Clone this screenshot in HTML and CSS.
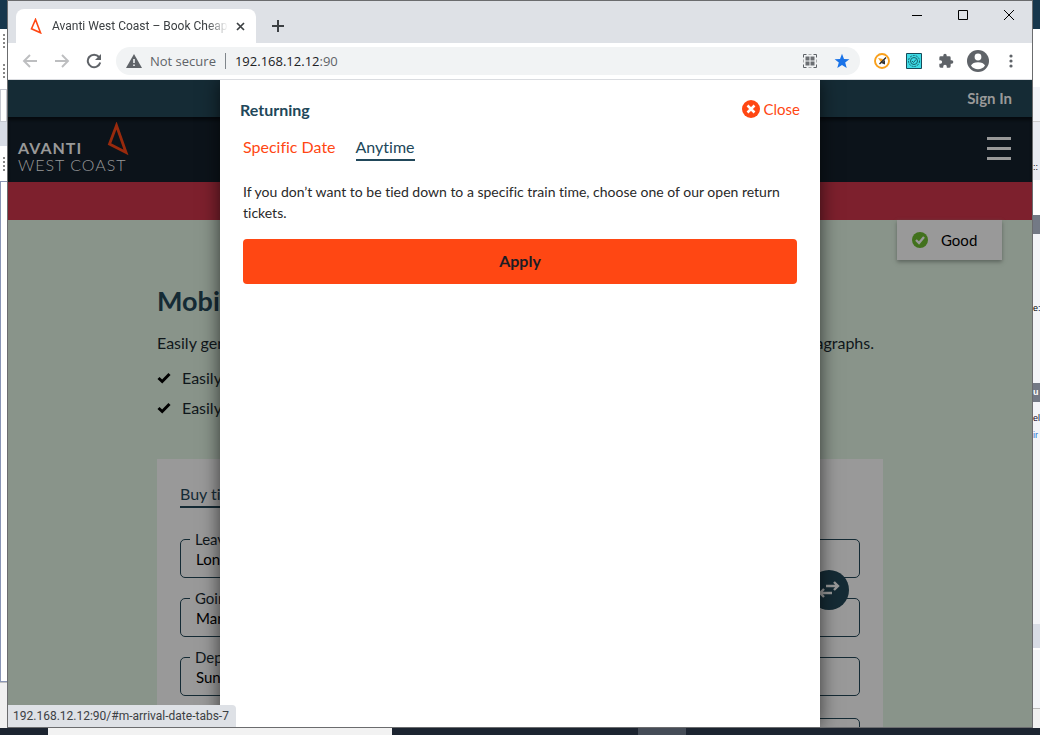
FILE: index.html
```
<!DOCTYPE html>
<html lang="en">
<head>
<meta charset="utf-8">
<title>Avanti West Coast – Book Cheap</title>
<link rel="stylesheet" href="styles.css">
</head>
<body>
<div class="desktop">
  <div class="edge edge-left">
    <div class="strip navy"></div><div class="strip grips"></div><div class="strip grips"></div><div class="strip ruled"></div><div class="strip bluish"></div><div class="strip grips second"></div><div class="strip panel"></div><div class="strip foot"></div>
  </div>
  <div class="browser">
    <div class="tabbar">
      <div class="tab">
        <svg class="favicon" viewBox="0 0 16 16"><path d="M7.5 1.5 3.5 10.8 12.5 14.8Z" fill="none" stroke="#ff4713" stroke-width="1.6"/></svg>
        <span class="tab-title">Avanti West Coast – Book Cheap</span>
        <button class="plain" aria-label="Close tab"><svg width="9" height="9" viewBox="0 0 9 9"><path d="M1 1l7 7M8 1l-7 7" stroke="#3c4043" stroke-width="1.7"/></svg></button>
      </div>
      <button class="plain new-tab" aria-label="New tab"><svg width="12" height="12" viewBox="0 0 12 12"><path d="M6 0v12M0 6h12" stroke="#3c4043" stroke-width="2"/></svg></button>
      <div class="window-buttons">
        <button class="plain" aria-label="Minimise"><svg width="10" height="10" viewBox="0 0 10 10"><path d="M0 5.5h10" stroke="#000"/></svg></button>
        <button class="plain" aria-label="Maximise"><svg width="10" height="10" viewBox="0 0 10 10"><path d="M.5.5h9v9h-9z" fill="none" stroke="#000"/></svg></button>
        <button class="plain" aria-label="Close window"><svg width="10" height="10" viewBox="0 0 10 10"><path d="M0 0l10 10M10 0L0 10" stroke="#000"/></svg></button>
      </div>
    </div>
    <div class="toolbar">
      <div class="nav-buttons">
        <button class="plain" aria-label="Back"><svg width="16" height="16" viewBox="0 0 16 16"><path d="M15 8H2M8 2L2 8l6 6" fill="none" stroke="#bdbec0" stroke-width="1.9"/></svg></button>
        <button class="plain" aria-label="Forward"><svg width="16" height="16" viewBox="0 0 16 16"><path d="M1 8h13M8 2l6 6-6 6" fill="none" stroke="#bdbec0" stroke-width="1.9"/></svg></button>
        <button class="plain" aria-label="Reload"><svg width="16" height="16" viewBox="0 0 16 16"><path d="M13 4A6.3 6.3 0 1 0 14.2 9.500" fill="none" stroke="#5f6368" stroke-width="2"/><path d="M15 1v6H9z" fill="#5f6368"/></svg></button>
      </div>
      <div class="address">
        <svg width="16" height="14" viewBox="0 0 16 14"><path d="M8 0l8 14H0z" fill="#5f6368"/><path d="M8 5v4M8 10.500v1.500" stroke="#f1f3f4" stroke-width="1.6"/></svg>
        <span class="insecure">Not secure</span>
        <span class="url">192.168.12.12<span class="port">:90</span></span>
        <svg class="qr" width="14" height="14" viewBox="0 0 14 14"><path d="M.5 3.500V.5H3.500M10.500 .5h3v3M13.500 10.500v3h-3M3.500 13.500h-3v-3" fill="none" stroke="#5f6368"/><path d="M5.500 .5h3M5.500 13.500h3M.5 5.500v3M13.500 5.500v3" stroke="#aaacae"/><path d="M2.500 2.500h4v4h-4zM7.500 2.500h4v4h-4zM2.500 7.500h4v4h-4zM7.500 7.500h4v4h-4z" fill="#6b6e72"/></svg>
        <svg width="16" height="16" viewBox="0 0 16 16"><path d="M8 .8l2 5.100 5.400.3-4.200 3.400 1.500 5.300L8 11.900l-4.700 3 1.500-5.300L.6 6.200 6 5.900z" fill="#1a73e8"/></svg>
      </div>
      <div class="extensions">
        <svg width="16" height="16" viewBox="0 0 16 16"><circle cx="8" cy="8" r="7" fill="#fff" stroke="#f9a01b" stroke-width="1.900"/><path d="M4 5l5 1-1.500 4z" fill="#f9a01b"/><path d="M12 4.500L5.500 11" stroke="#222" stroke-width="1.300"/><path d="M11 7v4.500L7 10z" fill="#333"/></svg>
        <svg width="16" height="16" viewBox="0 0 16 16"><path d="M.5.5h15v15H.5z" fill="#3ddbe5" stroke="#174a59"/><circle cx="8" cy="8" r="5.500" fill="none" stroke="#17606c" stroke-dasharray="2 1"/><circle cx="8" cy="8" r="3.500" fill="none" stroke="#17606c"/><path d="M6 8l1.500 1.500L10 6.500" fill="none" stroke="#17606c"/></svg>
        <svg width="16" height="16" viewBox="0 0 24 24"><path d="M20.500 11H19V7a2 2 0 0 0-2-2h-4V3.500a2.500 2.500 0 0 0-5 0V5H4a2 2 0 0 0-2 2v3.800h1.500a2.700 2.700 0 0 1 0 5.400H2V20a2 2 0 0 0 2 2h3.800v-1.500a2.700 2.700 0 0 1 5.400 0V22H17a2 2 0 0 0 2-2v-4h1.500a2.500 2.500 0 0 0 0-5z" fill="#5f6368"/></svg>
        <svg class="avatar" width="22" height="22" viewBox="0 0 22 22"><circle cx="11" cy="11" r="11" fill="#5f6368"/><circle cx="11" cy="7" r="3.400" fill="#fff"/><path d="M4 15.500c1.500-4.500 12.500-4.500 14 0-3 5-11 5-14 0z" fill="#fff"/></svg>
        <svg width="4" height="14" viewBox="0 0 4 14"><g fill="#5f6368"><circle cx="2" cy="2" r="1.600"/><circle cx="2" cy="7" r="1.600"/><circle cx="2" cy="12" r="1.600"/></g></svg>
      </div>
    </div>
    <div class="viewport">
      <div class="site">
        <div class="account"><a href="#">Sign In</a></div>
        <header class="masthead">
          <div class="brand">
            <div class="brand-name"><b>AVANTI</b><span>WEST COAST</span></div>
            <svg class="brand-mark" viewBox="0 0 22 34"><path d="M9.500 3.500L2.500 22 19 30.500z" fill="none" stroke="#992a0d" stroke-width="2.800"/></svg>
          </div>
          <button class="plain" aria-label="Menu"><svg width="24" height="24" viewBox="0 0 24 24"><path d="M0 1.500h24M0 11.500h24M0 21.500h24" stroke="#999" stroke-width="3"/></svg></button>
        </header>
        <div class="alert"></div>
        <main class="hero">
          <div class="status"><svg width="16" height="16" viewBox="0 0 16 16"><circle cx="8" cy="8" r="8" fill="#42711d"/><path d="M4 8l3 3 5-6" fill="none" stroke="#999" stroke-width="2.300"/></svg>Good</div>
          <h1>Mobil</h1>
          <p class="intro"><span>Easily gen</span><span>agraphs.</span></p>
          <ul class="benefits">
            <li><svg width="14" height="12" viewBox="0 0 14 12"><path d="M1.500 6l3.700 3.500L12.500 2" fill="none" stroke="#000" stroke-width="3"/></svg>Easily</li>
            <li><svg width="14" height="12" viewBox="0 0 14 12"><path d="M1.500 6l3.700 3.500L12.500 2" fill="none" stroke="#000" stroke-width="3"/></svg>Easily</li>
          </ul>
          <form class="booking">
            <a class="booking-tab" href="#">Buy tic</a>
            <div class="fields">
              <fieldset><legend><label for="from">Leav</label></legend><input id="from" value="Lon"></fieldset>
              <fieldset><legend><label for="to">Goin</label></legend><input id="to" value="Man"></fieldset>
              <fieldset><legend><label for="depart">Dep</label></legend><input id="depart" value="Sun"></fieldset>
              <fieldset class="last"><input aria-label="Return"></fieldset>
              <button class="swap" type="button" aria-label="Swap stations"><svg width="22" height="18" viewBox="0 0 22 18"><path d="M8 5h12M16 1L20 5l-4 4M14 12H2M6 8L2 12l4 4" fill="none" stroke="#999" stroke-width="2.400"/></svg></button>
            </div>
          </form>
        </main>
      </div>
      <section class="dialog" role="dialog" aria-labelledby="dialog-title">
        <div class="dialog-head">
          <h2 id="dialog-title">Returning</h2>
          <button class="plain close"><svg width="18" height="18" viewBox="0 0 18 18"><circle cx="9" cy="9" r="9" fill="#ff4713"/><path d="M5.500 5.500l7 7M12.500 5.500l-7 7" stroke="#fff" stroke-width="2.500"/></svg>Close</button>
        </div>
        <nav class="date-tabs"><a href="#">Specific Date</a><a class="current" href="#">Anytime</a></nav>
        <p class="note">If you don’t want to be tied down to a specific train time, choose one of our open return tickets.</p>
        <button class="apply">Apply</button>
      </section>
      <div class="link-status">192.168.12.12:90/#m-arrival-date-tabs-7</div>
    </div>
  </div>
  <div class="edge edge-right">
    <div class="strip navy"></div><div class="strip r1"></div><div class="strip r2"></div><div class="strip r3">::</div><div class="strip r4"></div><div class="strip grey r5"></div><div class="strip r6">e:</div><div class="strip grey r7">u</div><div class="strip r8">el<span>ir</span></div><div class="strip bluish"></div><div class="strip r9"></div><div class="strip r10"></div>
  </div>
  <div class="taskbar"><div class="search"></div><div class="task"></div></div>
</div>
</body>
</html>
```
FILE: styles.css
```
* { box-sizing: border-box; }
body { margin: 0; font-family: Lato, sans-serif; font-variant-ligatures: none; }
h1, h2, p, ul, fieldset, legend { margin: 0; padding: 0; }
a { color: inherit; text-decoration: none; }
button, input { font: inherit; color: inherit; }
svg { display: block; flex: none; }
.plain { border: 0; padding: 0; background: none; }
.desktop { display: grid; grid-template: minmax(0, 1fr) 7px / 7px minmax(0, 1fr) 7px; height: 100vh; overflow: hidden; background: #f3f4f8; }

.edge { display: flex; flex-direction: column; overflow: hidden; font: 9px/14px "Liberation Sans", sans-serif; }
.strip { flex: none; }
.navy { height: 29px; background: #17374c; }
.grips { height: 30px; border: solid #fff; border-width: 4px 0 11px; background: radial-gradient(circle at 4px 2px, #888 1px, #fff 1px) 0 0 / 7px 4px; }
.ruled { height: 33px; border: 1px solid #c5c8d0; background: #fff; }
.bluish { height: 24px; background: #d8dce5; }
.second { height: 35px; border-width: 10px 0; }
.panel { height: 501px; background: #fff; border: solid #8995b5; border-width: 1px 0 1px 1px; }
.foot { flex: 1; background: #f0f0f0; border-top: 1px solid #c0c0c0; }
.r1 { height: 58px; background: #fff; }
.r2 { height: 35px; border-bottom: 1px solid #ccc; }
.r3 { height: 58px; padding-top: 38px; background: #e8eaf0; }
.r4 { height: 35px; background: #fff; }
.grey { height: 19px; padding-top: 2px; background: #737985; color: #fff; font-weight: bold; }
.r6 { height: 149px; padding-top: 67px; }
.r8 { height: 222px; padding-top: 9px; color: #102; }
.r8 span { display: block; padding-top: 3px; color: #2a73d2; }
.r9 { height: 60px; border-top: 2px solid #fff; }
.r10 { flex: 1; border-top: 1px solid #bbb; background: #f0f0f0; }

.browser { display: flex; flex-direction: column; min-height: 0; border: 1px solid #6b6c6e; }
.tabbar { display: flex; align-items: flex-end; flex: none; height: 42px; background: #dee1e6; }
.tab { display: flex; align-items: center; gap: 8px; width: 240px; height: 34px; margin-left: 8px; padding: 0 11px 0 12px; border-radius: 8px 8px 0 0; background: #fff; font: 12px Roboto, sans-serif; color: #3c4043; }
.favicon { width: 16px; height: 16px; }
.tab-title { flex: 1; white-space: nowrap; mask-image: linear-gradient(90deg, #000 88%, transparent); }
.new-tab { margin: 0 0 11px 16px; }
.window-buttons { display: flex; gap: 36px; margin: 0 18px 23px auto; }
.toolbar { display: flex; align-items: center; flex: none; gap: 14px; height: 37px; padding: 0 19px 0 14px; border-bottom: 1px solid #dadce0; background: #fff; }
.nav-buttons { display: flex; gap: 16px; }
.address { display: flex; flex: 1; align-items: center; height: 28px; padding: 0 10px; border-radius: 14px; background: #f1f3f4; font: 13px "Open Sans", sans-serif; }
.insecure { margin-left: 8px; padding-right: 9px; border-right: 1px solid #80868b; line-height: 16px; color: #5f6368; }
.url { margin-left: 9px; color: #202124; }
.port { color: #5f6368; }
.qr { margin: 0 17px 0 auto; }
.extensions { display: flex; align-items: center; gap: 16px; }
.avatar { margin: 0 4px 0 -3px; }

.viewport { position: relative; flex: 1; min-height: 0; overflow: hidden; background: #89948a; }
.account { display: flex; align-items: center; justify-content: flex-end; height: 37px; padding: 0 20px 2px 0; background: #152b35; color: #999; font-weight: bold; font-size: 15px; }
.masthead { display: flex; align-items: center; justify-content: space-between; height: 65px; padding: 0 21px 2px 10px; background: #0c131a; box-shadow: inset 0 3px 3px #060a0e; color: #999; }
.brand { position: relative; padding-top: 14px; }
.brand-name { display: flex; flex-direction: column; font-size: 16px; line-height: 17px; letter-spacing: 1px; }
.brand-name span { font-weight: 300; }
.brand-mark { position: absolute; right: -2px; top: -3px; width: 22px; height: 34px; }
.alert { height: 38px; background: #7d202d; }
.hero { position: relative; padding: 63px 149px 0; color: #10171b; }
.status { position: absolute; top: 0; right: 30px; display: flex; align-items: center; gap: 13px; width: 105px; height: 40px; padding-left: 15px; background: #999; box-shadow: 0 2px 4px #5c645d; font-size: 15px; color: #000; }
h1 { font-size: 27px; line-height: 36px; color: #152b35; }
.intro { display: flex; justify-content: space-between; margin-top: 12px; padding-right: 9px; font-size: 16px; line-height: 24px; }
.benefits { margin-top: 8px; list-style: none; font-size: 16px; line-height: 30px; }
.benefits li { display: flex; align-items: center; gap: 11px; }
.booking { height: 400px; margin-top: 36px; padding: 23px; background: #999; }
.booking-tab { display: inline-block; border-bottom: 2px solid #152b35; font-size: 16px; line-height: 24px; color: #152b35; }
.fields { position: relative; display: grid; gap: 11px; margin-top: 22px; }
fieldset { height: 48px; min-width: 0; border: 1px solid #152b35; border-radius: 5px; }
legend { margin-left: 9px; padding: 0 5px; font-size: 15px; line-height: 18px; }
fieldset input { display: block; width: 100%; height: 22px; padding: 0 15px; border: 0; background: none; outline: 0; font-size: 15px; color: #000; }
.last { height: 38px; margin-top: 11px; }
.swap { position: absolute; right: 11px; top: 40px; display: grid; place-items: center; width: 40px; height: 40px; padding: 0; border: 0; border-radius: 50%; background: #152b35; }

.dialog { position: absolute; inset: 0 212px; padding: 18px 20px 0; background: #fff; box-shadow: 0 0 18px rgba(0, 0, 0, .65); }
.dialog-head { display: flex; align-items: center; justify-content: space-between; height: 22px; }
h2 { font-size: 16px; color: #21475a; }
.close { display: flex; align-items: center; gap: 4px; font-size: 15px; color: #ff4713; }
.date-tabs { display: flex; gap: 20px; margin: 15px 3px 0; font-size: 16px; line-height: 24px; color: #ff4713; }
.date-tabs .current { border-bottom: 2px solid #21475a; color: #21475a; }
.note { margin: 20px 3px 0; font-size: 14px; line-height: 21px; color: #292929; }
.apply { display: block; width: calc(100% - 6px); height: 45px; margin: 16px 3px 0; padding-bottom: 3px; border: 0; border-radius: 4px; background: #ff4713; font-size: 16px; font-weight: bold; color: #1c1c24; }
.link-status { position: absolute; left: 0; bottom: 0; height: 22px; padding: 0 7px 0 5px; border-radius: 0 4px 0 0; background: #dee1e6; font: 12px/22px Roboto, sans-serif; color: #3c4043; }

.taskbar { grid-column: 1 / -1; display: flex; background: #1c2430; }
.search { width: 344px; margin-left: 48px; background: #f2f2f2; }
.task { width: 48px; margin-left: 246px; background: #454c57; }
```
